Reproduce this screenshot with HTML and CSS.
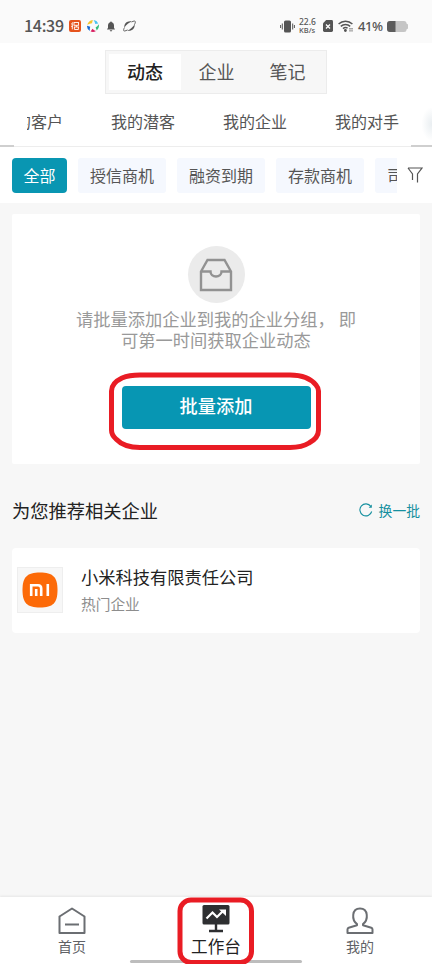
FILE: index.html
```html
<!DOCTYPE html>
<html lang="zh-CN">
<head>
<meta charset="utf-8">
<meta name="viewport" content="width=device-width, initial-scale=1">
<title>工作台</title>
<link rel="stylesheet" href="styles.css">
</head>
<body>
<div class="phone">
  <header class="status">
    <span class="time">14:39</span>
    <svg class="s-app" width="12" height="12" viewBox="0 0 12 12"><rect width="12" height="12" rx="2" fill="#e5531c"/><g fill="none" stroke="#fff" stroke-width=".9"><path d="M2.2 4.2 4 2.4M3.3 3.4v6M2.2 6.4h1.4"/><rect x="5" y="2.5" width="4.500" height="2.800"/><path d="M5 7h5M7.4 5.3V7M5.4 7v2.5h4V7"/></g></svg>
    <svg class="s-swirl" width="12" height="12" viewBox="0 0 12 12"><path d="M.2 4.800Q1.500.8 5.800 0L5 3.200Q3 3.200.2 4.800Z" fill="#f6c42c"/><path d="M6.500 0Q10 .5 11.300 3.400L8.300 4Q8 2 6.500 0Z" fill="#4cc3ef"/><path d="M11.700 4.200Q12.700 7.800 9.800 10.600L8.600 7.600Q10.600 6.500 11.700 4.200Z" fill="#35bd7b"/><path d="M9 11.100Q6.500 12.600 3.600 11.500L5.500 8.800Q7 10.500 9 11.100Z" fill="#d81e60"/><path d="M2.900 11.100Q-.2 9.200.1 5.800L3.300 6.800Q2.500 8.500 2.900 11.100Z" fill="#1769d2"/></svg>
    <svg class="s-bell" width="8" height="11" viewBox="0 0 8 11" fill="#555"><path d="M4 .4a.8.8 0 0 1 .8.9C6.400 1.800 7 3 7 4.500v2.300L8 8.600H0l1-1.800V4.500C1 3 1.700 1.800 3.200 1.300A.8.800 0 0 1 4 .4ZM2.700 9.300h2.600a1.300 1.100 0 0 1-2.600 0Z"/></svg>
    <svg class="s-planet" width="13" height="12" viewBox="0 0 13 12" fill="#555"><path d="M1.400 7.600C.8 3.500 4.500.4 8.800 1.500 6 2.300 3.400 4.700 1.400 7.600ZM11.600 4.400c.6 4.100-3.100 7.200-7.400 6.100C7 9.700 9.600 7.300 11.600 4.400Z"/><path d="M1.500 7.500C.300 9.700.300 11.200 1.600 11c.9-.1 1.900-.500 2.900-1.100M8.500 2c2.200-1.100 3.500-1.200 3.800-.5.2.7-.2 1.900-.9 3.200" fill="none" stroke="#555" stroke-width=".9"/></svg>
    <div class="status-right">
      <svg width="15" height="13" viewBox="0 0 15 13" fill="#555"><rect x="4" y=".5" width="7" height="12" rx="1.600"/><path d="M2.300 3.500v6M.6 5v3M12.700 3.500v6M14.400 5v3" stroke="#555" stroke-width="1"/></svg>
      <span class="speed"><b>22.6</b><b>KB/s</b></span>
      <svg class="s-sim" width="10" height="12" viewBox="0 0 10 12"><path d="M3.200 0H8.600Q10 0 10 1.400v9.200Q10 12 8.600 12H1.400Q0 12 0 10.600V3.200Z" fill="#555"/><path d="m3 4.500 4 4m0-4-4 4" stroke="#fff" stroke-width="1.300"/></svg>
      <svg class="s-wifi" width="15" height="12" viewBox="0 0 15 12" fill="none" stroke="#555" stroke-width="1.500"><path d="M.6 4C4.500.3 10.500.3 14.400 4M2.800 6.400c2.700-2.500 6.700-2.500 9.400 0M5 8.600c1.500-1.300 3-1.500 4.600-.5"/><circle cx="7.400" cy="10.500" r=".7" fill="#555"/><path d="M12 8v3.500M14 8v3.500" stroke-width="1" stroke-dasharray="1.500 .7"/></svg>
      <span class="percent">41%</span>
      <svg width="21" height="11" viewBox="0 0 21 11"><path d="M3 0h14q2.500 0 2.500 2.500l1.500 1v4l-1.500 1Q19.500 11 17 11H3Q0 11 0 8V3Q0 0 3 0Z" fill="#c5c5c5"/><path d="M8.500 0H3Q0 0 0 3v5q0 3 3 3h5.500Z" fill="#5c5c5c"/></svg>
    </div>
  </header>

  <div class="top">
    <div class="segments">
      <div class="segment active">动态</div>
      <div class="segment">企业</div>
      <div class="segment">笔记</div>
    </div>
  </div>

  <nav class="groups">
    <div class="group-track">
      <span>我的客户</span><span>我的潜客</span><span>我的企业</span><span>我的对手</span>
    </div>
    <i class="edge-shadow"></i>
    <i class="edge-line left"></i>
    <i class="edge-line right"></i>
  </nav>

  <div class="filters">
    <div class="chips">
      <span class="chip on">全部</span><span class="chip">授信商机</span><span class="chip">融资到期</span><span class="chip">存款商机</span><span class="chip last">司</span>
    </div>
    <svg class="funnel" width="16" height="16" viewBox="0 0 16 16" fill="none" stroke="#555" stroke-width="1.200"><path d="M1 1h14l-4.500 6v8.500M1 1l4.500 6v6"/></svg>
  </div>

  <main>
    <section class="empty">
      <div class="empty-icon">
        <svg width="34" height="34" viewBox="0 0 34 34" fill="none" stroke="#929292" stroke-width="2.400"><path d="M2 13.500 8.500 2h17L32 13.500V32H2ZM2 13.500h9.500a5.500 5 0 0 0 11 0H32"/></svg>
      </div>
      <p><span>请批量添加企业到我的企业分组，&nbsp;即</span><span>可第一时间获取企业动态</span></p>
      <div class="action">
        <button>批量添加</button>
        <svg class="mark" width="212" height="80" viewBox="0 0 212 80" fill="none" stroke="#e91c24" stroke-width="5"><path d="M31 3H181Q199 3 207 13Q209.500 16 209.500 19V58Q209.500 66 200 71Q193 75.500 181 75.500H31Q15 75.500 7 67Q2.500 63 2.500 58V19Q2.500 11 13 6Q20 3 31 3Z"/></svg>
      </div>
    </section>

    <div class="recommend-head">
      <h2>为您推荐相关企业</h2>
      <div class="refresh">
        <svg width="14" height="14" viewBox="0 0 14 14" fill="none" stroke="#16909f" stroke-width="1.100"><path d="M12.700 8.500A6 6 0 1 1 11.800 3.400"/><path d="M12.800 1.500v3.200H9.700Z" fill="#16909f" stroke="none"/></svg>
        <span>换一批</span>
      </div>
    </div>

    <section class="company">
      <div class="logo">
        <svg width="36" height="36" viewBox="0 0 36 36"><path d="M18 .5C31 .5 35.500 5 35.500 18S31 35.500 18 35.500.5 31 .5 18 5 .5 18 .5Z" fill="#fc6a08"/><path d="M9.200 24V13.200H16q3.200 0 3.200 3.200V24M14.200 24v-7M25.800 12v12" fill="none" stroke="#fff" stroke-width="2.600"/></svg>
      </div>
      <div class="company-text">
        <h3>小米科技有限责任公司</h3>
        <span>热门企业</span>
      </div>
    </section>
  </main>

  <footer class="tabs">
    <div class="tab">
      <svg width="28" height="28" viewBox="0 0 28 28" fill="none" stroke="#6b6e72" stroke-width="2"><path d="M1.500 9.500 14 1.500l12.500 8V26h-25ZM7 17.500h14" stroke-linejoin="round"/></svg>
      <span>首页</span>
    </div>
    <div class="tab current">
      <svg width="28" height="28" viewBox="0 0 28 28"><rect x=".5" width="27" height="19.500" rx="1.500" fill="#2e2f31"/><path d="M14 19v7M7 26h14" stroke="#2e2f31" stroke-width="2.400"/><path d="m4.500 13.500 6-6 4.500 4.500 6-6" fill="none" stroke="#fff" stroke-width="2.200"/><path d="M17 4.500h7v6.500Z" fill="#fff"/></svg>
      <span>工作台</span>
      <i class="home-bar"></i>
      <svg class="mark" width="78" height="68" viewBox="0 0 78 68" fill="none" stroke="#e91c24" stroke-width="5"><rect x="3" y="3" width="71.500" height="62.500" rx="11"/></svg>
    </div>
    <div class="tab">
      <svg width="28" height="28" viewBox="0 0 28 28" fill="none" stroke="#6b6e72" stroke-width="2"><path d="M11 17C5.500 13 5.500 1.500 14 1.500S22.500 13 17 17v1.300l8.300 2.400q1.200.4 1.200 1.800V26h-25v-3.500q0-1.400 1.200-1.800L11 18.300Z" stroke-linejoin="round"/></svg>
      <span>我的</span>
    </div>
  </footer>
</div>
</body>
</html>
```
FILE: styles.css
```css
* { box-sizing: border-box; }
body { margin: 0; background: #f7f7f7; font-family: "Noto Sans CJK SC", sans-serif; color: #222; }
svg { display: block; flex: none; }
h2, h3, p { margin: 0; }
.phone { width: 432px; height: 964px; display: flex; flex-direction: column; overflow: hidden; }

.status { height: 43px; flex: none; display: flex; align-items: center; padding: 9px 24px 0 24px; background: #fafafa; color: #555; }
.time { width: 39px; margin-top: -2px; font: 500 16px/20px "Noto Sans CJK SC", sans-serif; letter-spacing: -.3px; white-space: nowrap; }
.s-app { margin-left: 6px; }
.s-swirl { margin-left: 6px; }
.s-bell { margin-left: 8px; }
.s-planet { margin-left: 8px; }
.status-right { margin-left: auto; display: flex; align-items: center; }
.speed { width: 19px; margin: 0 5px 0 4px; display: flex; flex-direction: column; font-family: "Noto Sans", sans-serif; white-space: nowrap; }
.speed b { font-size: 8.500px; line-height: 8px; height: 8px; font-weight: 500; }
.speed b:last-child { font-size: 7.500px; }
.s-wifi { margin-left: 5px; }
.percent { width: 25px; margin: 0 4px 0 5px; font: 500 13px/16px "Noto Sans", sans-serif; letter-spacing: -.4px; }

.top { height: 57px; flex: none; display: flex; justify-content: center; align-items: flex-start; padding-top: 7px; background: #fff; }
.segments { width: 222px; height: 44px; display: flex; padding: 3px; background: #f7f7f7; border: 1px solid #ececec; }
.segment { flex: 1; display: flex; align-items: center; justify-content: center; padding-bottom: 2px; font-size: 18px; color: #555; }
.segment.active { flex: 0 0 72px; background: #fff; color: #222; font-weight: 500; }

.groups { position: relative; height: 47px; flex: none; background: #fff; border-bottom: 1px solid #ededed; }
.group-track { margin-left: 27px; width: 372px; height: 42px; display: flex; justify-content: flex-end; align-items: center; gap: 48px; overflow: hidden; font-size: 16px; color: #555; white-space: nowrap; }
.edge-line { position: absolute; bottom: -1px; height: 2px; background: #cfcfcf; }
.edge-line.left { left: 0; width: 14px; }
.edge-line.right { right: 0; width: 21px; }
.edge-shadow { position: absolute; right: 0; top: 8px; width: 10px; height: 32px; background: radial-gradient(ellipse at right, #e9eef1, #fff 75%); }

.filters { height: 56px; flex: none; display: flex; padding: 11px 9px 0 12px; background: #fff; }
.chips { width: 385px; height: 35px; display: flex; gap: 11px; overflow: hidden; }
.chip { flex: none; width: 88px; height: 35px; display: flex; align-items: center; justify-content: center; padding-bottom: 2px; border-radius: 3px; background: #f5f8fe; font-size: 16px; color: #555; }
.chip.on { width: 55px; background: #0996b2; color: #fff; border-radius: 4px; }
.chip.last { justify-content: flex-start; padding-left: 12px; }
.funnel { margin: 9px 0 0 10px; }

main { flex: 1; padding: 11px 12px 0; }
.empty { height: 250px; display: flex; flex-direction: column; align-items: center; padding-top: 32px; background: #fff; border-radius: 2px; }
.empty-icon { width: 57px; height: 57px; flex: none; display: flex; align-items: center; justify-content: center; border-radius: 50%; background: #ebebeb; }
.empty p { margin-top: 5px; display: flex; flex-direction: column; align-items: center; font-size: 17.25px; line-height: 21px; color: #999; white-space: nowrap; }
.action { position: relative; margin-top: 36px; }
.action button { display: block; width: 189px; height: 43px; padding: 0 0 4px; border: 0; border-radius: 4px; background: #0796b3; color: #fff; font: 500 18.2px/39px "Noto Sans CJK SC", sans-serif; }
.action .mark { position: absolute; left: -13px; top: -14px; }

.recommend-head { height: 84px; display: flex; align-items: center; justify-content: space-between; padding-top: 8px; }
.recommend-head h2 { font-size: 18.25px; font-weight: 400; line-height: 26px; }
.refresh { display: flex; align-items: center; gap: 6px; font-size: 13.8px; color: #16909f; }

.company { height: 85px; display: flex; padding: 19px 5px; background: #fff; border-radius: 4px; }
.logo { width: 46px; height: 46px; display: flex; align-items: center; justify-content: center; background: #f7f7f7; border: 1px solid #eee; }
.company-text { margin-left: 18px; display: flex; flex-direction: column; }
.company h3 { margin-top: -3px; font-size: 17.25px; font-weight: 400; line-height: 26px; }
.company span { margin-top: 2px; font-size: 14.7px; line-height: 24px; color: #8d8d8d; }

.tabs { height: 67px; flex: none; display: flex; background: #fff; box-shadow: 0 -1px 2px #e6e6e6; }
.tab { position: relative; flex: 1; display: flex; flex-direction: column; align-items: center; padding-top: 10px; font-size: 14px; line-height: 20px; color: #606266; }
.tab span { margin-top: 1px; }
.tab.current { padding-top: 8px; font-size: 16.6px; color: #222; }
.tab.current span { margin-top: 3px; }
.home-bar { position: absolute; left: -14px; top: 63px; width: 172px; height: 3px; border-radius: 2px; background: #bdbdbd; }
.tab .mark { position: absolute; left: 33px; top: 0; }
```
